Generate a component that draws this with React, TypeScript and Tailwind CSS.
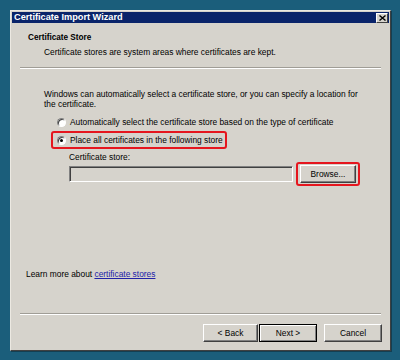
import React from "react";

const font = { fontFamily: '"Liberation Sans", Arial, sans-serif' };

function Radio({ checked }: { checked?: boolean }) {
  return (
    <span className="relative flex h-[9px] w-[9px] shrink-0 items-center justify-center rounded-full border border-t-[#808080] border-l-[#808080] border-r-white border-b-white bg-white shadow-[inset_1px_1px_0_#404040]">
      {checked && <span className="h-[3px] w-[3px] rounded-full bg-black" />}
    </span>
  );
}

function Button({ label, width, primary }: { label: string; width: string; primary?: boolean }) {
  return (
    <div
      className={`${width} flex h-[18px] items-center justify-center bg-[#d6d3cc] text-[8.4px] text-black ${
        primary
          ? "border border-black shadow-[inset_1px_1px_0_#ffffff,inset_-1px_-1px_0_#808080]"
          : "border border-t-white border-l-white border-r-[#404040] border-b-[#404040] shadow-[inset_-1px_-1px_0_#808080]"
      }`}
    >
      {label}
    </div>
  );
}

export default function App() {
  return (
    <div className="h-[360px] w-[400px] bg-[#1b5e7b] pl-[10px] pt-[10px]" style={font}>
      <div className="flex h-[341px] w-[381px] flex-col border border-t-[#ece9e2] border-l-[#ece9e2] border-r-[#404040] border-b-[#404040] bg-[#d6d3cc] shadow-[1px_1px_0_#143f52]">
        {/* title bar */}
        <div className="mx-[1px] mt-[1px] flex h-[11px] items-center justify-between bg-[#0a246a] pl-[2px] pr-[1px]">
          <span className="text-[9.2px] font-bold leading-none text-white">Certificate Import Wizard</span>
          <span className="flex h-[10px] w-[12px] items-center justify-center border border-t-white border-l-white border-r-[#404040] border-b-[#404040] bg-[#d6d3cc]">
            <svg width="7" height="6" viewBox="0 0 7 6">
              <path d="M0.5 0.5 L6.5 5.5 M6.5 0.5 L0.5 5.5" stroke="#000" strokeWidth="1.4" />
            </svg>
          </span>
        </div>

        {/* header */}
        <div className="mt-[10px] flex h-[10px] items-center pl-[17px] text-[8.2px] font-bold text-black">
          Certificate Store
        </div>
        <div className="mt-[4px] flex h-[10px] items-center pl-[33px] text-[8.4px] text-black">
          Certificate stores are system areas where certificates are kept.
        </div>
        <div className="ml-[9px] mr-[9px] mt-[10px] h-[2px] border-t border-t-[#a09d96] border-b border-b-white" />

        {/* body */}
        <div className="mt-[20px] pl-[33px] text-[8.4px] leading-[10px] text-black">
          Windows can automatically select a certificate store, or you can specify a location for
          <br />
          the certificate.
        </div>

        <div className="mt-[8px] flex h-[10px] items-center gap-[4px] pl-[46px] text-[8.4px] text-black">
          <Radio />
          <span>Automatically select the certificate store based on the type of certificate</span>
        </div>

        <div className="ml-[40px] mt-[4px] flex h-[18px] w-[176px] items-center gap-[4px] rounded-[3px] border-2 border-[#e5161e] pl-[4px] text-[8.4px] text-black">
          <Radio checked />
          <span>Place all certificates in the following store</span>
        </div>

        <div className="mt-[3px] flex h-[10px] items-center pl-[58px] text-[8.4px] text-black">
          Certificate store:
        </div>

        <div className="flex h-[24px] items-center pl-[58px]">
          <div className="h-[16px] w-[224px] border border-t-[#808080] border-l-[#808080] border-r-white border-b-white bg-[#d6d3cc] shadow-[inset_1px_1px_0_#404040]" />
          <div className="ml-[3px] flex h-[24px] w-[64px] items-center justify-center rounded-[3px] border-2 border-[#e5161e]">
            <Button label="Browse..." width="w-[56px]" />
          </div>
        </div>

        <div className="mt-[83px] flex h-[10px] items-center pl-[15px] text-[8.4px] text-black">
          <span>Learn more about&nbsp;</span>
          <span className="text-[#2222a8] underline">certificate stores</span>
        </div>

        <div className="ml-[9px] mr-[9px] mt-[34px] h-[2px] border-t border-t-[#a09d96] border-b border-b-white" />

        <div className="mt-[9px] flex items-center pl-[192px]">
          <Button label="< Back" width="w-[55px]" />
          <div className="ml-[1px]">
            <Button label="Next >" width="w-[58px]" primary />
          </div>
          <div className="ml-[7px]">
            <Button label="Cancel" width="w-[58px]" />
          </div>
        </div>
      </div>
    </div>
  );
}
